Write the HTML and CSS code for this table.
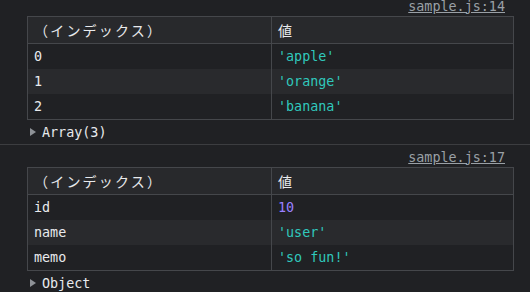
FILE: index.html
```html
<!DOCTYPE html>
<html>
<head>
    <title>Console</title>
    <link rel="stylesheet" href="styles.css">
</head>
<body>
    <div class="console">
        <div class="message first">
            <div class="source"><a href="#">sample.js:14</a></div>
            <table class="log-table">
                <tr class="head">
                    <th class="col-key">（インデックス）</th>
                    <th>値</th>
                </tr>
                <tr><td class="col-key">0</td><td class="str">'apple'</td></tr>
                <tr class="alt"><td class="col-key">1</td><td class="str">'orange'</td></tr>
                <tr><td class="col-key">2</td><td class="str">'banana'</td></tr>
            </table>
            <div class="summary"><span class="arrow"></span>Array(3)</div>
        </div>

        <div class="message">
            <div class="source"><a href="#">sample.js:17</a></div>
            <table class="log-table">
                <tr class="head">
                    <th class="col-key">（インデックス）</th>
                    <th>値</th>
                </tr>
                <tr><td class="col-key">id</td><td class="num">10</td></tr>
                <tr class="alt"><td class="col-key">name</td><td class="str">'user'</td></tr>
                <tr><td class="col-key">memo</td><td class="str">'so fun!'</td></tr>
            </table>
            <div class="summary"><span class="arrow"></span>Object</div>
        </div>
    </div>
</body>
</html>
```

FILE: styles.css
```css
body {
    background-color: #202124;
    color: #e8eaed;
    font-family: 'DejaVu Sans Mono', 'Liberation Mono', monospace;
    font-size: 13.4px;
    margin: 0;
    overflow: hidden;
}

.message {
    padding: 2px 16px 0 27px;
    border-top: 1px solid #3c3d40;
}

.message.first {
    margin-top: -6px;
    border-top: none;
}

.source {
    height: 20px;
    display: flex;
    justify-content: flex-end;
    align-items: center;
    padding-right: 9px;
}

.source a {
    color: #9aa0a6;
    text-decoration: underline;
}

.log-table {
    width: 487px;
    border-collapse: collapse;
    border: 1px solid #45474b;
    table-layout: fixed;
}

.log-table th,
.log-table td {
    text-align: left;
    font-weight: normal;
    padding: 0 6px;
    height: 25px;
    white-space: nowrap;
}

.log-table th {
    height: 26px;
    background-color: #28292c;
    border-bottom: 1px solid #45474b;
    font-family: 'Noto Sans CJK JP', sans-serif;
    font-size: 14px;
    letter-spacing: 2.2px;
    color: #e8eaed;
}

.log-table .col-key {
    width: 231px;
    border-right: 1px solid #45474b;
}

.log-table tr.alt td {
    background-color: #292a2d;
}

.str {
    color: #30c8bc;
}

.num {
    color: #9980ff;
}

.summary {
    height: 24px;
    display: flex;
    align-items: center;
    padding-left: 3px;
}

.arrow {
    width: 0;
    height: 0;
    border-top: 4.5px solid transparent;
    border-bottom: 4.5px solid transparent;
    border-left: 6px solid #8e9297;
    margin-right: 6px;
}
```
